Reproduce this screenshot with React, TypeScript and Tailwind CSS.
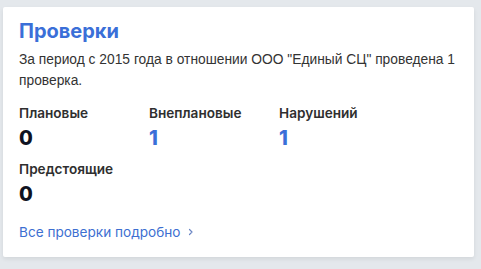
export default function App() {
  const stats = [
    { label: 'Плановые', value: '0', accent: false },
    { label: 'Внеплановые', value: '1', accent: true },
    { label: 'Нарушений', value: '1', accent: true },
    { label: 'Предстоящие', value: '0', accent: false },
  ];

  return (
    <div className="min-h-[269px] bg-[#e4e8ec] pt-[7px] pl-[3px] pr-[7px] pb-[10px] font-['Inter',sans-serif]">
      <div className="bg-white rounded-[2px] shadow-[0_2px_4px_rgba(0,0,0,0.08)] pl-4 pr-3 pt-[10px] pb-[15px]">
        <h2 className="text-[20px] leading-[28px] font-bold text-[#3a6fd8]">Проверки</h2>
        <p className="mt-[4px] font-['Liberation_Sans',Arial,sans-serif] text-[13.8px] leading-[21px] text-[#333333]">
          За период с 2015 года в отношении ООО "Единый СЦ" проведена 1 проверка.
        </p>

        {/* Stats */}
        <div className="mt-[13px] flex flex-wrap gap-y-[10px]">
          {stats.map((s) => (
            <div key={s.label} className="w-[130px]">
              <div className="text-[13.6px] leading-[18px] font-semibold text-[#2f2f2f]">{s.label}</div>
              <div
                className={
                  s.accent
                    ? 'mt-[4px] text-[20px] leading-[24px] font-extrabold text-[#3a6fd8]'
                    : 'mt-[4px] text-[20px] leading-[24px] font-extrabold text-[#0f1222]'
                }
              >
                {s.value}
              </div>
            </div>
          ))}
        </div>

        <a href="#" className="mt-[16px] flex items-center gap-[7px] text-[13.6px] leading-[20px] text-[#3d6fd1]">
          Все проверки подробно
          <svg className="w-[8px] h-[8px] text-[#6b86c4]" viewBox="0 0 8 8" fill="none" stroke="currentColor" strokeWidth={1.2}>
            <path d="M2.5 1.5 5 4 2.5 6.5" strokeLinecap="round" strokeLinejoin="round" />
          </svg>
        </a>
      </div>
    </div>
  );
}
